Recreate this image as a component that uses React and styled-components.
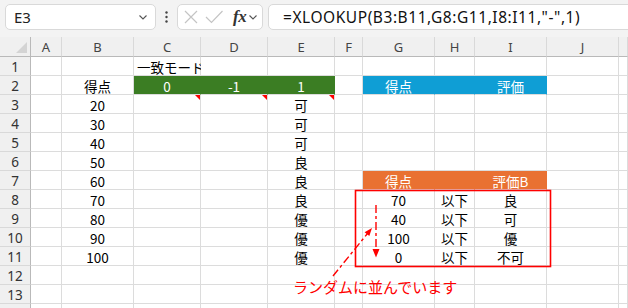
import React from "react";
import styled, { createGlobalStyle } from "styled-components";

const GlobalStyle = createGlobalStyle`
  html, body { margin: 0; padding: 0; background: #fff; }
  body { overflow: hidden; }
`;

const Page = styled.div`
  position: relative;
  width: 628px;
  height: 308px;
  overflow: hidden;
  background: #fff;
  font-family: "Noto Sans CJK JP", sans-serif;
`;

const FormulaBar = styled.div`
  display: flex;
  align-items: flex-start;
  height: 37px;
  box-sizing: border-box;
  padding: 4px 0 0 5px;
  background: #f3f3f3;
`;

const Box = styled.div`
  display: flex;
  align-items: center;
  height: 26px;
  box-sizing: border-box;
  background: #fff;
  border: 1px solid #d9d9d9;
  border-radius: 5px;
  flex: none;
`;

const NameBox = styled(Box)`
  width: 151px;
  padding: 0 8px 0 8px;
  justify-content: space-between;
  font-family: "Noto Sans", sans-serif;
  font-size: 15px;
  color: #222;
`;

const Dots = styled.div`
  width: 21px;
  height: 26px;
  display: flex;
  align-items: center;
  justify-content: center;
  flex: none;
`;

const FxBox = styled(Box)`
  width: 86px;
  padding: 0 0 0 6px;
`;

const FxLabel = styled.span`
  font-family: "Liberation Serif", serif;
  font-style: italic;
  font-weight: bold;
  font-size: 17px;
  color: #333;
  margin: 0 3px 0 9px;
  letter-spacing: -0.5px;
`;

const FormulaBox = styled(Box)`
  margin-left: 5px;
  width: 420px;
  padding-left: 14px;
  font-family: "Noto Sans", sans-serif;
  font-size: 15.5px;
  letter-spacing: 0.55px;
  color: #111;
  white-space: nowrap;
`;

const COLS = [31, 31, 72, 67, 67, 67, 28, 72, 40, 72, 72];

const Sheet = styled.div`
  display: grid;
  grid-template-columns: ${COLS.map((c) => c + "px").join(" ")} 1fr;
  grid-template-rows: 20px repeat(14, 19px);
`;

const Corner = styled.div`
  position: relative;
  background: #f0f0f0;
  border-right: 1px solid #b9b9b9;
  border-bottom: 1px solid #b9b9b9;
`;

const CornerTri = styled.svg`
  position: absolute;
  right: 3px;
  bottom: 3px;
`;

const ColHead = styled.div`
  background: #f0f0f0;
  border-right: 1px solid #d9d9d9;
  border-bottom: 1px solid #b9b9b9;
  display: flex;
  align-items: center;
  justify-content: center;
  padding-top: 1px;
  font-family: "Noto Sans", sans-serif;
  font-size: 13px;
  color: #444;
`;

const RowHead = styled.div`
  background: #f0f0f0;
  border-right: 1px solid #b9b9b9;
  border-bottom: 1px solid #d9d9d9;
  display: flex;
  align-items: center;
  justify-content: center;
  padding-top: 1px;
  font-family: "Noto Sans", sans-serif;
  font-size: 13.5px;
  color: #333;
`;

const Cell = styled.div`
  position: relative;
  box-sizing: border-box;
  border-right: 1px solid ${(p) => (p.$fill ? p.$fill : "#dcdcdc")};
  border-bottom: 1px solid #dcdcdc;
  background: ${(p) => p.$fill || "#fff"};
  color: ${(p) => (p.$fill ? "#fff" : "#000")};
  display: flex;
  align-items: center;
  justify-content: ${(p) =>
    p.$align === "left" ? "flex-start" : p.$align === "right" ? "flex-end" : "center"};
  padding: 2px 3px 0;
  font-size: 13.5px;
  white-space: nowrap;
  overflow: visible;
  &::after {
    content: "";
    display: ${(p) => (p.$comment ? "block" : "none")};
    position: absolute;
    top: 0;
    right: 0;
    width: 0;
    height: 0;
    border-top: 5px solid #ff0000;
    border-left: 5px solid transparent;
  }
`;

const Overlay = styled.svg`
  position: absolute;
  left: 0;
  top: 0;
  pointer-events: none;
`;

const Note = styled.div`
  position: absolute;
  left: 293px;
  top: 277px;
  font-size: 15px;
  line-height: 20px;
  color: #ff0000;
  white-space: nowrap;
`;

const GREEN = "#3b7d23";
const BLUE = "#0f9ed5";
const ORANGE = "#e97132";

const LETTERS = ["A", "B", "C", "D", "E", "F", "G", "H", "I", "J", ""];

const data = {};
const put = (r, c, text, opts = {}) => {
  data[r + "," + c] = { text, ...opts };
};
put(1, 2, "一致モード", { align: "left" });
put(2, 1, "得点");
put(2, 2, "0", { fill: GREEN });
put(2, 3, "-1", { fill: GREEN });
put(2, 4, "1", { fill: GREEN });
put(2, 6, "得点", { fill: BLUE });
put(2, 7, "", { fill: BLUE });
put(2, 8, "評価", { fill: BLUE });
const bVals = [20, 30, 40, 50, 60, 70, 80, 90, 100];
const eVals = ["可", "可", "可", "良", "良", "良", "優", "優", "優"];
bVals.forEach((v, i) => put(3 + i, 1, String(v)));
eVals.forEach((v, i) => put(3 + i, 4, v));
put(3, 2, "", { comment: true });
put(3, 3, "", { comment: true });
data["3,4"].comment = true;
put(7, 6, "得点", { fill: ORANGE });
put(7, 7, "", { fill: ORANGE });
put(7, 8, "評価B", { fill: ORANGE });
const gVals = ["70", "40", "100", "0"];
const iVals = ["良", "可", "優", "不可"];
gVals.forEach((v, i) => {
  put(8 + i, 6, v);
  put(8 + i, 7, "以下");
  put(8 + i, 8, iVals[i]);
});

const Chevron = () => (
  <svg width="8" height="5" viewBox="0 0 8 5">
    <path d="M0.5 0.5 L4 4 L7.5 0.5" fill="none" stroke="#555" strokeWidth="1.1" />
  </svg>
);

export default function App() {
  const rows = [];
  for (let r = 1; r <= 14; r++) {
    rows.push(<RowHead key={"rh" + r}>{r < 14 ? r : ""}</RowHead>);
    for (let c = 0; c < 11; c++) {
      const d = data[r + "," + c];
      rows.push(
        <Cell
          key={r + "-" + c}
          $fill={d && d.fill}
          $align={d && d.align}
          $comment={d && d.comment}
        >
          {d ? d.text : ""}
        </Cell>
      );
    }
  }

  return (
    <Page>
      <GlobalStyle />
      <FormulaBar>
        <NameBox>
          <span>E3</span>
          <Chevron />
        </NameBox>
        <Dots>
          <svg width="3" height="12" viewBox="0 0 3 12">
            <circle cx="1.5" cy="1.5" r="1.2" fill="#444" />
            <circle cx="1.5" cy="6" r="1.2" fill="#444" />
            <circle cx="1.5" cy="10.5" r="1.2" fill="#444" />
          </svg>
        </Dots>
        <FxBox>
          <svg width="14" height="14" viewBox="0 0 14 14">
            <path d="M1 1 L13 13 M13 1 L1 13" stroke="#c4c4c4" strokeWidth="1.2" fill="none" />
          </svg>
          <svg width="20" height="14" viewBox="0 0 20 14" style={{ marginLeft: 6 }}>
            <path d="M2 7 L7.5 12.5 L18.5 1" stroke="#c4c4c4" strokeWidth="1.2" fill="none" />
          </svg>
          <FxLabel>fx</FxLabel>
          <Chevron />
        </FxBox>
        <FormulaBox>=XLOOKUP(B3:B11,G8:G11,I8:I11,"-",1)</FormulaBox>
      </FormulaBar>
      <Sheet>
        <Corner>
          <CornerTri width="11" height="11" viewBox="0 0 11 11">
            <polygon points="11,0 11,11 0,11" fill="#d4d4d4" />
          </CornerTri>
        </Corner>
        {LETTERS.map((l, i) => (
          <ColHead key={"ch" + i}>{l}</ColHead>
        ))}
        {rows}
      </Sheet>
      <Overlay width="628" height="308" viewBox="0 0 628 308">
        <rect x="355.5" y="190.5" width="195" height="76" fill="none" stroke="#ff0000" strokeWidth="1.6" />
        <line x1="376" y1="205" x2="376" y2="249" stroke="#ff0000" strokeWidth="1.4" strokeDasharray="8 3 3 3" />
        <polygon points="372.5,249 379.5,249 376,257.5" fill="#ff0000" />
        <line x1="333" y1="276" x2="367.5" y2="233.5" stroke="#ff0000" strokeWidth="1.4" strokeDasharray="8 3 3 3" />
        <polygon points="372,228 369.3,236.1 364.6,232.3" fill="#ff0000" />
      </Overlay>
      <Note>ランダムに並んでいます</Note>
    </Page>
  );
}
